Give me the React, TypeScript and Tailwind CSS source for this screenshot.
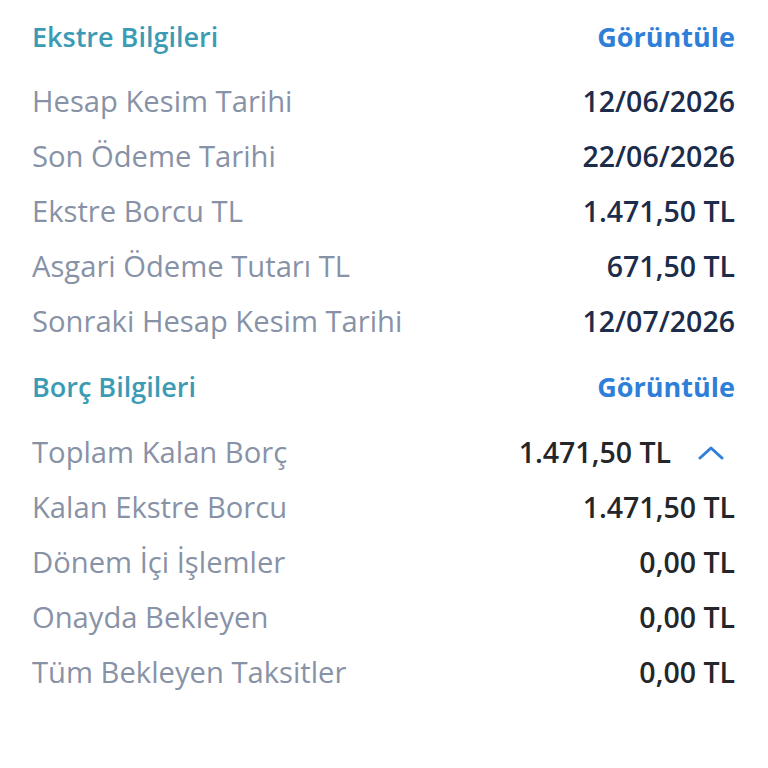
import React from "react";

const Row = ({ label, value, navy, chevron }: { label: string; value: string; navy?: boolean; chevron?: boolean }) => (
  <div className="flex items-center justify-between h-[55px]">
    <span className="text-[29.2px] text-[#8892a6]">{label}</span>
    <div className="flex items-center">
      <span className={`text-[28.5px] font-semibold ${navy ? "text-[#1c2c4a]" : "text-[#242629]"}`}>{value}</span>
      {chevron && (
        <svg width="26" height="16" viewBox="0 0 26 16" className="ml-[27px] mr-[11px]" fill="none">
          <path d="M2 13 L13 3 L24 13" stroke="#2f7fd9" strokeWidth="3" strokeLinecap="round" strokeLinejoin="round" />
        </svg>
      )}
    </div>
  </div>
);

const Header = ({ title }: { title: string }) => (
  <div className="flex items-center justify-between h-[55px]">
    <span className="text-[27px] font-semibold text-[#3b9bb5]">{title}</span>
    <span className="text-[27px] font-bold text-[#2f7fd9]">Görüntüle</span>
  </div>
);

export default function App() {
  return (
    <div className="w-[768px] h-[768px] bg-white pl-[32px] pr-[33px] pt-[10px]" style={{ fontFamily: '"Open Sans", sans-serif' }}>
      <Header title="Ekstre Bilgileri" />
      <div className="h-[9px]" />
      <Row label="Hesap Kesim Tarihi" value="12/06/2026" navy />
      <Row label="Son Ödeme Tarihi" value="22/06/2026" navy />
      <Row label="Ekstre Borcu TL" value="1.471,50 TL" navy />
      <Row label="Asgari Ödeme Tutarı TL" value="671,50 TL" navy />
      <Row label="Sonraki Hesap Kesim Tarihi" value="12/07/2026" navy />
      <div className="h-[11px]" />
      <Header title="Borç Bilgileri" />
      <div className="h-[10px]" />
      <Row label="Toplam Kalan Borç" value="1.471,50 TL" chevron />
      <Row label="Kalan Ekstre Borcu" value="1.471,50 TL" />
      <Row label="Dönem İçi İşlemler" value="0,00 TL" />
      <Row label="Onayda Bekleyen" value="0,00 TL" />
      <Row label="Tüm Bekleyen Taksitler" value="0,00 TL" />
    </div>
  );
}
